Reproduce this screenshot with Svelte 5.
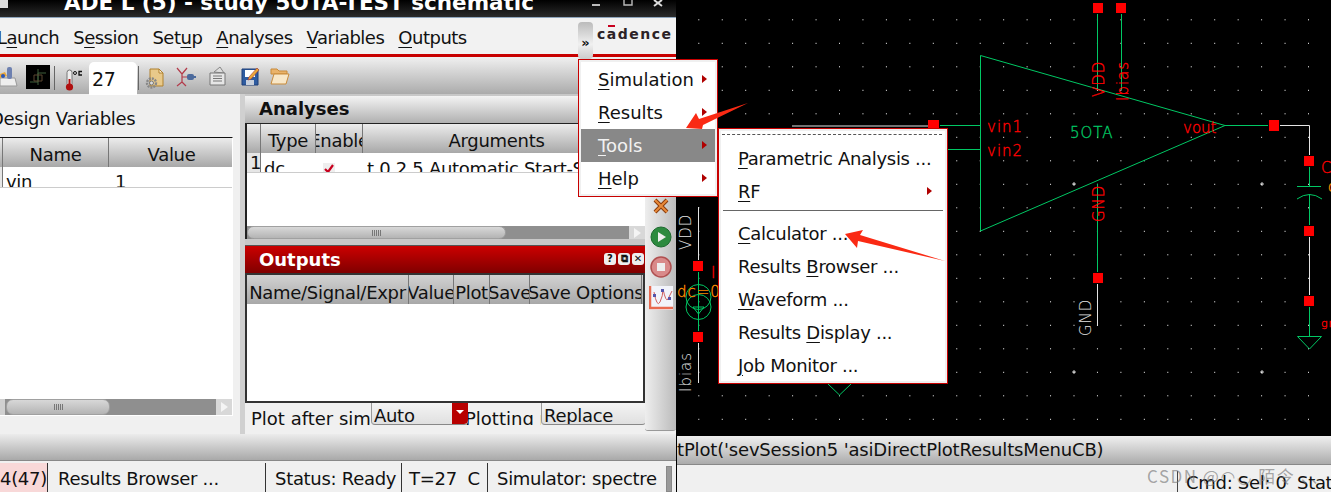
<script lang="ts">
const gridX = Array.from({ length: 28 }, (_, i) => 698.3 + i * 23.45);
const gridY = Array.from({ length: 18 }, (_, i) => 19.3 + i * 23.5);

const mainMenu = [
  { pre: '', key: 'S', post: 'imulation' },
  { pre: '', key: 'R', post: 'esults' },
  { pre: '', key: 'T', post: 'ools', active: true },
  { pre: '', key: 'H', post: 'elp' }
];

const toolsTop = [
  { pre: '', key: 'P', post: 'arametric Analysis ...' },
  { pre: '', key: 'R', post: 'F', arrow: true }
];
const toolsBottom = [
  { pre: '', key: 'C', post: 'alculator ...' },
  { pre: 'Results ', key: 'B', post: 'rowser ...' },
  { pre: '', key: 'W', post: 'aveform ...' },
  { pre: 'Results ', key: 'D', post: 'isplay ...' },
  { pre: '', key: 'J', post: 'ob Monitor ...' }
];

const outputCols = [
  ['Name/Signal/Expr', 162],
  ['Value', 45],
  ['Plot', 36],
  ['Save', 40],
  ['Save Options', 112]
];
</script>

<div class="screen">
  <section class="ade">
    <header class="titlebar">
      <span class="appicon"></span>
      <h1>ADE L (5) - study 5OTA-TEST schematic</h1>
      <svg class="winbtns" width="74" height="10" viewBox="0 0 74 10">
        <path d="M0 5h8" stroke="#bbb" stroke-width="2" />
        <path d="M32 0v5h8V0" stroke="#bbb" stroke-width="1.400" fill="none" />
        <path d="M62 0l8 6M70 0l-8 6" stroke="#ddd" stroke-width="2" />
      </svg>
    </header>

    <nav class="menubar">
      <div class="menuitems">
        <span>L<u>a</u>unch</span>
        <span>S<u>e</u>ssion</span>
        <span>Set<u>u</u>p</span>
        <span><u>A</u>nalyses</span>
        <span><u>V</u>ariables</span>
        <span><u>O</u>utputs</span>
      </div>
      <button class="more">»</button>
      <div class="logo"><span>c</span><span class="abar">a</span><span>d</span><span>e</span><span>n</span><span>c</span><span>e</span></div>
    </nav>
    <div class="redline"></div>

    <div class="toolbar">
      <svg class="ticon first" width="18" height="24" viewBox="0 0 18 24">
        <path d="M0 14h15l2 8H0z" fill="#eee" stroke="#999" />
        <path d="M0 10l5-2 2 4-7 2z" fill="#e9a63a" />
        <rect x="7" y="3" width="5" height="12" rx="2" fill="#6d80b0" />
        <circle cx="3" cy="12" r="2" fill="#2a56b8" />
      </svg>
      <svg class="ticon sch" width="24" height="24" viewBox="0 0 24 24">
        <rect width="24" height="24" fill="#000" />
        <path d="M4 17h8v-9h8M12 4v16" stroke="#3f5f3a" fill="none" />
        <path d="M8 10h8v6H8z" stroke="#5b4630" fill="none" />
      </svg>
      <i class="sep s1"></i>
      <svg class="ticon therm" width="19" height="24" viewBox="0 0 19 24">
        <rect x="3" y="1" width="5" height="16" rx="2.500" fill="#eee" stroke="#777" />
        <rect x="4.500" y="10" width="2" height="8" fill="#b01010" />
        <circle cx="5.500" cy="18" r="3.600" fill="#b01010" />
        <circle cx="11" cy="4" r="1.500" fill="none" stroke="#111" />
        <path d="M18 2.500h-3v3.500h3" fill="none" stroke="#111" stroke-width="1.300" />
      </svg>
      <div class="tempbox">27</div>
      <i class="sep s2"></i>
      <svg class="ticon gear" width="19" height="22" viewBox="0 0 19 22">
        <path d="M5 1h9l4 4v13H5z" fill="#e8c98a" stroke="#b0812f" />
        <path d="M14 1v4h4z" fill="#fff3d8" stroke="#b0812f" />
        <circle cx="6.500" cy="15" r="4.500" fill="none" stroke="#888" stroke-width="2.400" stroke-dasharray="2 1" />
        <circle cx="6.500" cy="15" r="2" fill="#ddd" stroke="#777" />
      </svg>
      <svg class="ticon net" width="20" height="20" viewBox="0 0 20 20">
        <path d="M1 1l5 6v8l-5 4M11 1L6 7M6 15l4 4M6 10h6" stroke="#b33a4a" stroke-width="1.200" fill="none" />
        <rect x="11" y="7" width="7" height="6" rx="2" fill="#4c6a9c" />
        <path d="M18 10h2" stroke="#4c6a9c" stroke-width="2" />
      </svg>
      <svg class="ticon paper" width="18" height="20" viewBox="0 0 18 20">
        <path d="M5 6l6-5 4 6z" fill="#ddd" stroke="#888" />
        <path d="M1 7h15v12H1z" fill="#e6e6e6" stroke="#777" />
        <path d="M4 10h9M4 12.500h9M4 15h9" stroke="#777" />
      </svg>
      <svg class="ticon floppy" width="19" height="20" viewBox="0 0 19 20">
        <path d="M1 3h16v16H1z" fill="#2f5ca0" stroke="#1f3f78" />
        <path d="M4 4h10v7H4z" fill="#fff" />
        <path d="M5 14h8v5H5z" fill="#c8d0dc" />
        <path d="M8 11l8-9 2 2-8 9-3 1z" fill="#e8a93a" stroke="#a33" stroke-width=".6" />
      </svg>
      <svg class="ticon folder" width="20" height="17" viewBox="0 0 20 17">
        <path d="M1 1h6l2 2h8v3H1z" fill="#eab36a" stroke="#c98b3a" />
        <path d="M4 6h15l-3 10H1z" fill="#f8e7c8" stroke="#c98b3a" />
      </svg>
    </div>

    <div class="workspace">
      <div class="designvars">
        <div class="dv-title">Design Variables</div>
        <div class="dv-table">
          <div class="thead">
            <span class="th" style="width:3px"></span>
            <span class="th" style="width:106px">Name</span>
            <span class="th val" style="width:123px">Value</span>
          </div>
          <div class="trow dvrow">
            <span class="rownum slim"></span>
            <span class="td" style="width:107px;padding-left:3px">vin</span>
            <span class="td" style="padding-left:5px">1</span>
          </div>
          <div class="tblank"></div>
          <div class="hscroll">
            <span class="arrowcell"></span>
            <span class="thumb dvthumb"><i class="grips"></i></span>
            <span class="arrowcell end"><i class="rtri"></i></span>
          </div>
          <div class="dv-foot"></div>
        </div>
      </div>

      <div class="splitter"></div>

      <div class="rightcol">
        <div class="analyses">
          <div class="dock grey">Analyses</div>
          <div class="frame a-frame">
            <div class="thead">
              <span class="th" style="width:14px"></span>
              <span class="th" style="width:55px">Type</span>
              <span class="th" style="width:47px">Enable</span>
              <span class="th" style="width:267px;border-right:0">Arguments</span>
            </div>
            <div class="trow arow">
              <span class="rownum">1</span>
              <span class="td" style="width:55px;padding-left:3px">dc</span>
              <span class="td chk" style="width:47px">
                <svg width="12" height="12" viewBox="0 0 12 12"><rect width="12" height="12" fill="#eee" /><path d="M2 6l3 3 5-7" stroke="#c8001e" stroke-width="2.200" fill="none" /></svg>
              </span>
              <span class="td" style="padding-left:4px">t 0 2.5 Automatic Start-Stop</span>
            </div>
            <div class="tblank"></div>
            <div class="hscroll short">
              <span class="thumb athumb"><i class="grips"></i></span>
              <span class="arrowcell end"><i class="rtri"></i></span>
            </div>
          </div>
        </div>

        <div class="outputs">
          <div class="dock red">
            Outputs
            <span class="dockbtns">
              <span>?</span><span>⧉</span><span>✕</span>
            </span>
          </div>
          <div class="frame o-frame">
            <div class="thead otable">
              {#each outputCols as [label, w]}
                <span class="th" style="width:{w}px">{label}</span>
              {/each}
            </div>
            <div class="tblank"></div>
          </div>
          <div class="plotrow">
            <span class="plotlabel">Plot after simulation</span>
            <span class="plotlabel second">Plotting mode</span>
            <div class="combo auto">Auto<span class="drop"></span></div>
            <div class="combo replace">Replace</div>
          </div>
        </div>
      </div>

      <aside class="sidetools">
        <svg width="16" height="16" viewBox="0 0 16 16">
          <path d="M2 2l12 12M14 2L2 14" stroke="#8a3b0c" stroke-width="4" />
          <path d="M2 2l12 12M14 2L2 14" stroke="#e88a3a" stroke-width="2" />
        </svg>
        <svg class="play" width="22" height="22" viewBox="0 0 22 22">
          <circle cx="11" cy="11" r="10" fill="#2d8a3f" stroke="#1d6a2f" />
          <path d="M8 6l8 5-8 5z" fill="#eee" />
        </svg>
        <svg width="22" height="22" viewBox="0 0 22 22">
          <circle cx="11" cy="11" r="10" fill="#d98a8a" stroke="#b05050" stroke-width="1.500" />
          <rect x="7" y="7" width="8" height="8" fill="#eee" />
        </svg>
        <svg width="24" height="24" viewBox="0 0 24 24">
          <rect width="24" height="24" fill="#f2f4fa" />
          <path d="M1 0v22h23" stroke="#e86a50" stroke-width="2.500" fill="none" />
          <path d="M5 6q3 16 6 10t3-13q3 14 5 10t4-8" stroke="#d06060" fill="none" />
          <rect x="4" y="8" width="3" height="3" fill="#55a" />
          <rect x="12" y="3" width="3" height="3" fill="#55a" />
          <rect x="19" y="11" width="3" height="3" fill="#55a" />
        </svg>
      </aside>
    </div>

    <div class="footbar"></div>

    <footer class="status">
      <span class="cell pink">4(47)</span>
      <span class="cell c2">Results Browser ...</span>
      <span class="cell c3">Status: Ready</span>
      <span class="cell c4">T=27&nbsp; C</span>
      <span class="cell c5">Simulator: spectre</span>
      <span class="grip"></span>
    </footer>
  </section>

  <section class="schematic">
    <div class="canvas">
      <svg width="654" height="436" viewBox="677 0 654 436">
        <g fill="#fff">
          {#each gridY as y}
            {#each gridX as x}
              <rect x={x} y={y} width="1" height="1" />
            {/each}
          {/each}
        </g>
        <path d="M1072 184h4M1074 182v4M1260 184h4M1262 182v4M1072 372h4M1074 370v4M1260 372h4M1262 370v4" stroke="#fff" stroke-width=".8" />

        <!-- white wires -->
        <g stroke="#e4e4e4" fill="none">
          <path d="M792 126H928" />
          <path d="M1280 125.500h29.500V155" />
          <path d="M1309.500 237V295" />
          <path d="M698.500 207V260M698.500 343V383" />
          <path d="M1097.500 284V326" />
        </g>

        <!-- green symbols -->
        <g stroke="#00c864" fill="none">
          <path d="M980.500 55.500L1225 125.500L980.500 231Z" />
          <path d="M940 125.500H980M945 149.500H980" />
          <path d="M1097.500 14V90M1121.500 14V90" />
          <path d="M1225 125.500H1268" />
          <path d="M1097.500 184V272" />
          <path d="M1309.500 167V186M1309.500 194V225" />
          <path d="M1297 186.500H1321" />
          <path d="M1297 199q12.500 -9 25 0" />
          <path d="M1309.500 307V336M1297.500 336.500H1321.500L1309.500 349Z" />
          <path d="M698.500 272V331" />
          <circle cx="698.500" cy="297" r="12.500" />
          <circle cx="698.500" cy="307" r="12.500" />
          <path d="M693 307h11l-5.500 7zM698.500 285v22" />
          <path d="M828 384L839.500 395L851 384" />
        </g>

        <!-- pins -->
        <g fill="#ff0000">
          <rect x="928" y="120" width="11" height="11" />
          <rect x="1093" y="3" width="10" height="10" />
          <rect x="1116" y="3" width="10" height="10" />
          <rect x="1269" y="120" width="10" height="11" />
          <rect x="1304" y="156" width="10" height="10" />
          <rect x="1304" y="226" width="10" height="10" />
          <rect x="1304" y="296" width="10" height="10" />
          <rect x="1093" y="273" width="10" height="10" />
          <rect x="693" y="261" width="10" height="10" />
          <rect x="693" y="332" width="10" height="10" />
        </g>

        <g class="sch-text">
          <text x="987" y="132" fill="#ff0000" stroke="#ff0000">vin1</text>
          <text x="987" y="156" fill="#ff0000" stroke="#ff0000">vin2</text>
          <text class="tight" x="1183" y="133" fill="#ff0000" stroke="#ff0000">vout</text>
          <text x="1070" y="138" fill="#00c864" stroke="#00c864">5OTA</text>
          <text transform="translate(1104 97) rotate(-90)" fill="#ff0000" stroke="#ff0000">VDD</text>
          <text transform="translate(1128 101) rotate(-90)" fill="#ff0000" stroke="#ff0000">Ibias</text>
          <text transform="translate(1104 222) rotate(-90)" fill="#ff0000" stroke="#ff0000">GND</text>
          <text transform="translate(1091 336) rotate(-90)" fill="#e4e4e4">GND</text>
          <text transform="translate(691 250) rotate(-90)" fill="#e4e4e4">VDD</text>
          <text transform="translate(691 392) rotate(-90)" fill="#e4e4e4">Ibias</text>
          <text x="711" y="278" fill="#ff0000" stroke="#ff0000">I</text>
          <text x="677" y="297" fill="#ff8c00" stroke="#ff8c00">dc=0</text>
          <text x="1321" y="173" fill="#ff0000" stroke="#ff0000">C</text>
          <text x="1328" y="192" fill="#ff8c00" stroke="#ff8c00">c</text>
          <text class="small" x="1321" y="327" fill="#ff0000" stroke="#ff0000">gn</text>
        </g>
      </svg>
    </div>
    <div class="cmdbar">tPlot('sevSession5 'asiDirectPlotResultsMenuCB)</div>
    <footer class="status2">
      <span class="cell2">Cmd: Sel: 0</span>
      <span class="stat">Stat</span>
      <span class="mark">CSDN @◠◡ 陌令 、、</span>
    </footer>
  </section>

  <!-- popup menus -->
  <div class="popup main">
    {#each mainMenu as m}
      <div class="mi" class:active={m.active}>
        <span>{m.pre}<u>{m.key}</u>{m.post}</span>
        <i class="tri"></i>
      </div>
    {/each}
  </div>

  <div class="popup tools">
    <div class="tearoff"></div>
    {#each toolsTop as m}
      <div class="mi">
        <span>{m.pre}<u>{m.key}</u>{m.post}</span>
        {#if m.arrow}<i class="tri"></i>{/if}
      </div>
    {/each}
    <div class="msep"></div>
    {#each toolsBottom as m}
      <div class="mi">
        <span>{m.pre}<u>{m.key}</u>{m.post}</span>
      </div>
    {/each}
  </div>

  <svg class="arrows" width="1331" height="492" viewBox="0 0 1331 492">
    <path d="M686 128L696 113L699 119L748 103L703 125L702 129Z" fill="#fa2a14" />
    <path d="M845 234L863 230L860 235L945 261L858 241L857 248Z" fill="#fa2a14" />
  </svg>
</div>

<style>
  :global(body) {
    margin: 0;
    background: #000;
  }

  .screen {
    position: relative;
    display: flex;
    width: 1331px;
    height: 492px;
    overflow: hidden;
    font-family: "DejaVu Sans", sans-serif;
    font-size: 18px;
    letter-spacing: -0.3px;
    color: #111;
  }

  u {
    text-underline-offset: 3px;
  }

  /* ---- left window ---- */
  .ade {
    width: 676px;
    flex: none;
    display: flex;
    flex-direction: column;
    background: #f0f0f0;
    border-right: 1px solid #000;
    overflow: hidden;
  }

  .titlebar {
    height: 18px;
    flex: none;
    position: relative;
    display: flex;
    justify-content: center;
    background: linear-gradient(#000, #2b2b2b);
    border-bottom: 1px solid #8fa6bd;
    box-sizing: border-box;
    overflow: hidden;
  }

  .titlebar h1 {
    margin: -10px 0 0 -78px;
    font-size: 21.500px;
    line-height: 26px;
    letter-spacing: 0;
    color: #fff;
    font-weight: bold;
    white-space: nowrap;
  }

  .appicon {
    position: absolute;
    left: 0;
    top: 0;
    width: 8px;
    height: 8px;
    background: #ddd;
  }

  .winbtns {
    position: absolute;
    left: 592px;
    top: 0;
  }

  .menubar {
    height: 36px;
    flex: none;
    display: flex;
    background: #f2f2f2;
    position: relative;
  }

  .menuitems {
    display: flex;
    flex: none;
    gap: 14px;
    width: 578px;
    box-sizing: border-box;
    margin-left: -3px;
    padding-top: 9px;
    letter-spacing: -0.5px;
    line-height: 22px;
    white-space: nowrap;
  }

  .more {
    flex: none;
    width: 15px;
    height: 37px;
    margin: 4px 0 0 3px;
    padding: 3px 0 0;
    border: 0;
    border-radius: 4px;
    font: bold 13px "DejaVu Sans", sans-serif;
    color: #111;
    background: linear-gradient(#bbb, #f0f0f0 60%, #ccc);
    z-index: 1;
  }

  .logo {
    display: flex;
    flex: none;
    gap: 1.500px;
    margin: 5px 0 0 4px;
    font-size: 14px;
    font-weight: bold;
    letter-spacing: 0;
    color: #2c2226;
    line-height: 22px;
  }

  .abar {
    position: relative;
  }

  .abar::before {
    content: "";
    position: absolute;
    left: 1px;
    right: 1px;
    top: 2px;
    height: 2px;
    background: #c8001e;
  }

  .redline {
    height: 3px;
    flex: none;
    background: #c80000;
  }

  .toolbar {
    height: 37px;
    flex: none;
    position: relative;
    background: linear-gradient(#f0f0f0, #ababab);
  }

  .ticon,
  .sep,
  .tempbox {
    position: absolute;
  }

  .first { left: 0; top: 7px; }
  .sch { left: 26px; top: 8px; }
  .therm { left: 64px; top: 12px; }
  .gear { left: 145px; top: 11px; }
  .net { left: 176px; top: 10px; }
  .paper { left: 209px; top: 9px; }
  .floppy { left: 241px; top: 9px; }
  .folder { left: 270px; top: 11px; }

  .sep {
    top: 9px;
    width: 1px;
    height: 24px;
    background: #666;
  }

  .s1 { left: 54px; }
  .s2 { left: 138px; }

  .tempbox {
    left: 89px;
    top: 5px;
    width: 48px;
    height: 33px;
    padding-left: 3px;
    box-sizing: border-box;
    background: #fff;
    border-radius: 5px 5px 0 0;
    font-size: 19px;
    line-height: 34px;
  }

  .workspace {
    flex: 1;
    min-height: 0;
    display: flex;
    position: relative;
  }

  .designvars {
    width: 240px;
    flex: none;
  }

  .dv-title {
    margin-left: -10px;
    height: 43px;
    line-height: 49px;
    white-space: nowrap;
  }

  .dv-table {
    width: 233px;
    height: 279px;
    display: flex;
    flex-direction: column;
    border-top: 1px solid #111;
    background: #fff;
    box-sizing: border-box;
    border-right: 1px solid #fff;
  }

  .thead {
    height: 29px;
    flex: none;
    display: flex;
    background: linear-gradient(#ececec, #a8a8a8);
  }

  .th {
    flex: none;
    display: flex;
    justify-content: center;
    box-sizing: border-box;
    line-height: 34px;
    border-right: 1px solid #777;
    overflow: hidden;
    white-space: nowrap;
  }

  .th.val {
    padding-left: 2px;
    border-right: 0;
  }

  .trow {
    display: flex;
    flex: none;
    background: #fff;
    overflow: hidden;
    white-space: nowrap;
  }

  .dvrow {
    height: 20px;
    line-height: 29px;
    border-bottom: 1px solid #ccc;
  }

  .td {
    flex: none;
    box-sizing: border-box;
    height: 100%;
  }

  .tblank {
    flex: 1;
    background: #fff;
  }

  .hscroll {
    height: 16px;
    flex: none;
    display: flex;
    background: #8f8f8f;
  }

  .hscroll.short {
    height: 13px;
  }

  .dv-foot {
    height: 1px;
    flex: none;
  }

  .arrowcell {
    width: 5px;
    background: #d0d0d0;
  }

  .arrowcell.end {
    display: flex;
    align-items: center;
    justify-content: center;
    width: 16px;
    margin-left: auto;
    background: #d8d8d8;
  }

  .rtri {
    width: 0;
    height: 0;
    border-left: 7px solid #f4f4f4;
    border-top: 5px solid transparent;
    border-bottom: 5px solid transparent;
  }

  .thumb {
    display: flex;
    align-items: center;
    justify-content: center;
    height: 100%;
    border-radius: 7px;
    box-sizing: border-box;
    background: linear-gradient(#d8d8d8, #b4b4b4);
    border: 1px solid #a0a0a0;
  }

  .grips {
    width: 9px;
    height: 6px;
    background: repeating-linear-gradient(90deg, #777 0 1px, transparent 1px 2px);
  }

  .dvthumb { width: 104px; margin-left: 1px; }
  .athumb { width: 259px; }

  .splitter {
    width: 5px;
    flex: none;
    background: #d0d0d0;
  }

  .rightcol {
    width: 400px;
    flex: none;
    display: flex;
    flex-direction: column;
  }

  .analyses {
    height: 151px;
    flex: none;
    padding-top: 2px;
    box-sizing: border-box;
    background: #c8c8c8;
  }

  .dock {
    height: 27px;
    padding-left: 14px;
    box-sizing: border-box;
    font-weight: bold;
    letter-spacing: 0;
    position: relative;
  }

  .dock.grey {
    line-height: 25px;
    background: linear-gradient(#f4f4f4, #b0b0b0);
  }

  .dock.red {
    line-height: 28px;
    color: #fff;
    background: linear-gradient(#cc0000, #800000);
  }

  .frame {
    display: flex;
    flex-direction: column;
    box-sizing: border-box;
    background: #fff;
  }

  .a-frame {
    height: 116px;
    border-top: 1px solid #222;
    border-left: 2px solid #222;
  }

  .arow {
    height: 19px;
    line-height: 31px;
    border-bottom: 1px solid #ccc;
  }

  .rownum {
    width: 14px;
    flex: none;
    background: #e6e6e6;
    border-right: 1px solid #777;
    box-sizing: border-box;
    padding-left: 3px;
    line-height: 20px;
  }

  .rownum.slim {
    width: 3px;
    padding: 0;
  }

  .chk svg {
    margin: 0 0 0 7px;
  }

  .outputs {
    flex: 1;
    min-height: 0;
    border-top: 1px solid #555;
  }

  .dockbtns {
    position: absolute;
    right: 1px;
    top: 7px;
    display: flex;
    gap: 2px;
  }

  .dockbtns span {
    width: 12px;
    height: 12px;
    border-radius: 3px;
    background: #eee;
    color: #111;
    font-size: 10px;
    font-weight: bold;
    line-height: 12px;
    text-align: center;
  }

  .o-frame {
    height: 130px;
    border: 2px solid #333;
  }

  .otable {
    background: linear-gradient(#d2d2d2, #a8a8a8);
  }

  .otable .th {
    line-height: 35px;
  }

  .plotrow {
    position: relative;
    height: 30px;
    overflow: hidden;
  }

  .plotlabel {
    position: absolute;
    top: 3px;
    white-space: nowrap;
    line-height: 26px;
    letter-spacing: 0;
    left: 6px;
    width: 120px;
    overflow: hidden;
  }

  .plotlabel.second {
    left: 220px;
    width: 76px;
    height: 19px;
  }

  .combo {
    position: absolute;
    top: 0;
    height: 22px;
    line-height: 25px;
    box-sizing: border-box;
    padding-left: 2px;
    overflow: hidden;
    background: linear-gradient(#f4f4f4, #e0e0e0);
    border-bottom: 1px solid #888;
    border-left: 1px solid #999;
    border-radius: 0 0 4px 4px;
  }

  .auto {
    left: 126px;
    width: 97px;
  }

  .replace {
    left: 296px;
    width: 105px;
  }

  .drop {
    position: absolute;
    right: 0;
    top: 0;
    width: 16px;
    height: 21px;
    border-radius: 0 0 4px 0;
    background: #b80000;
  }

  .drop::after {
    content: "";
    position: absolute;
    left: 4px;
    top: 7px;
    border: 4px solid transparent;
    border-top: 4px solid #fff;
  }

  .sidetools {
    width: 31px;
    flex: none;
    height: 337px;
    box-sizing: border-box;
    padding-top: 104px;
    display: flex;
    flex-direction: column;
    align-items: center;
    gap: 8px;
    border-radius: 0 0 3px 3px;
    border-bottom: 1px solid #999;
    background: linear-gradient(90deg, #eee, #bbb);
  }

  .play {
    margin-top: 4px;
  }

  .footbar {
    height: 27px;
    flex: none;
    background: linear-gradient(#ececec, #a9a9a9);
    border-bottom: 1px solid #888;
    box-sizing: border-box;
  }

  .status {
    height: 31px;
    flex: none;
    display: flex;
    background: #f0f0f0;
    position: relative;
    line-height: 32px;
    white-space: nowrap;
    overflow: hidden;
  }

  .cell {
    flex: none;
    box-sizing: border-box;
    height: 100%;
    border-right: 1px solid #333;
    margin-top: 2px;
    padding-left: 9px;
  }

  .pink {
    width: 48px;
    padding-left: 0;
    background: #f8d8d8;
  }

  .c2 { width: 218px; padding-left: 10px; }
  .c3 { width: 136px; }
  .c4 { width: 86px; padding-left: 7px; }
  .c5 { border: 0; }

  .grip {
    position: absolute;
    left: 666px;
    top: 5px;
    width: 6px;
    height: 26px;
    background: #999;
    border: 1px solid #888;
    box-sizing: border-box;
  }

  /* ---- schematic window ---- */
  .schematic {
    flex: 1;
    display: flex;
    flex-direction: column;
    min-width: 0;
    background: #f0f0f0;
  }

  .canvas {
    height: 436px;
    flex: none;
    background: #000;
  }

  .canvas svg {
    display: block;
  }

  .sch-text text {
    font-family: "DejaVu Sans", sans-serif;
    font-weight: 200;
    font-size: 15px;
    letter-spacing: 1px;
    stroke-width: 0.35px;
  }

  .sch-text .tight {
    letter-spacing: 0;
  }

  .sch-text .small {
    font-size: 11px;
  }

  .cmdbar {
    height: 29px;
    flex: none;
    box-sizing: border-box;
    line-height: 28px;
    letter-spacing: -0.17px;
    white-space: nowrap;
    overflow: hidden;
    background: linear-gradient(#f0f0f0, #ababab);
    border-bottom: 1px solid #888;
  }

  .status2 {
    flex: 1;
    position: relative;
    overflow: hidden;
  }

  .cell2 {
    position: absolute;
    left: 500px;
    top: 6px;
    padding-left: 8px;
    border-left: 1px solid #444;
    line-height: 24px;
    white-space: nowrap;
  }

  .stat {
    position: absolute;
    left: 620px;
    top: 6px;
    line-height: 24px;
  }

  .mark {
    position: absolute;
    left: 470px;
    top: -2px;
    color: rgba(120, 120, 120, 0.65);
    font: 17px "Noto Sans CJK SC", "DejaVu Sans", sans-serif;
    letter-spacing: 1.500px;
    white-space: nowrap;
  }

  /* ---- popups ---- */
  .popup {
    position: absolute;
    box-sizing: border-box;
    background: #fff;
    border: 1px solid #c80000;
    box-shadow: inset 0 0 0 2px #f0f0f0;
    white-space: nowrap;
  }

  .popup.main {
    left: 578px;
    top: 59px;
    width: 140px;
    height: 138px;
    padding: 3px 2px;
    letter-spacing: 0;
  }

  .popup.tools {
    left: 718px;
    top: 128px;
    width: 230px;
    height: 256px;
    padding: 13px 2px 0;
  }

  .mi {
    height: 33px;
    line-height: 33px;
    padding-left: 17px;
    position: relative;
  }

  .mi.active {
    background: #888;
    color: #f2f2f2;
  }

  .tri {
    position: absolute;
    right: 6px;
    top: 12px;
    width: 0;
    height: 0;
    border-left: 5px solid #b00000;
    border-top: 4px solid transparent;
    border-bottom: 4px solid transparent;
  }

  .popup.main .tri {
    right: 8px;
  }

  .popup.tools .tri {
    right: 13px;
  }

  .tearoff {
    position: absolute;
    left: 3px;
    right: 5px;
    top: 5px;
    border-top: 1px dashed #555;
  }

  .msep {
    height: 1px;
    margin: 2px 2px 6px;
    background: #666;
  }

  .arrows {
    position: absolute;
    left: 0;
    top: 0;
    pointer-events: none;
  }
</style>
